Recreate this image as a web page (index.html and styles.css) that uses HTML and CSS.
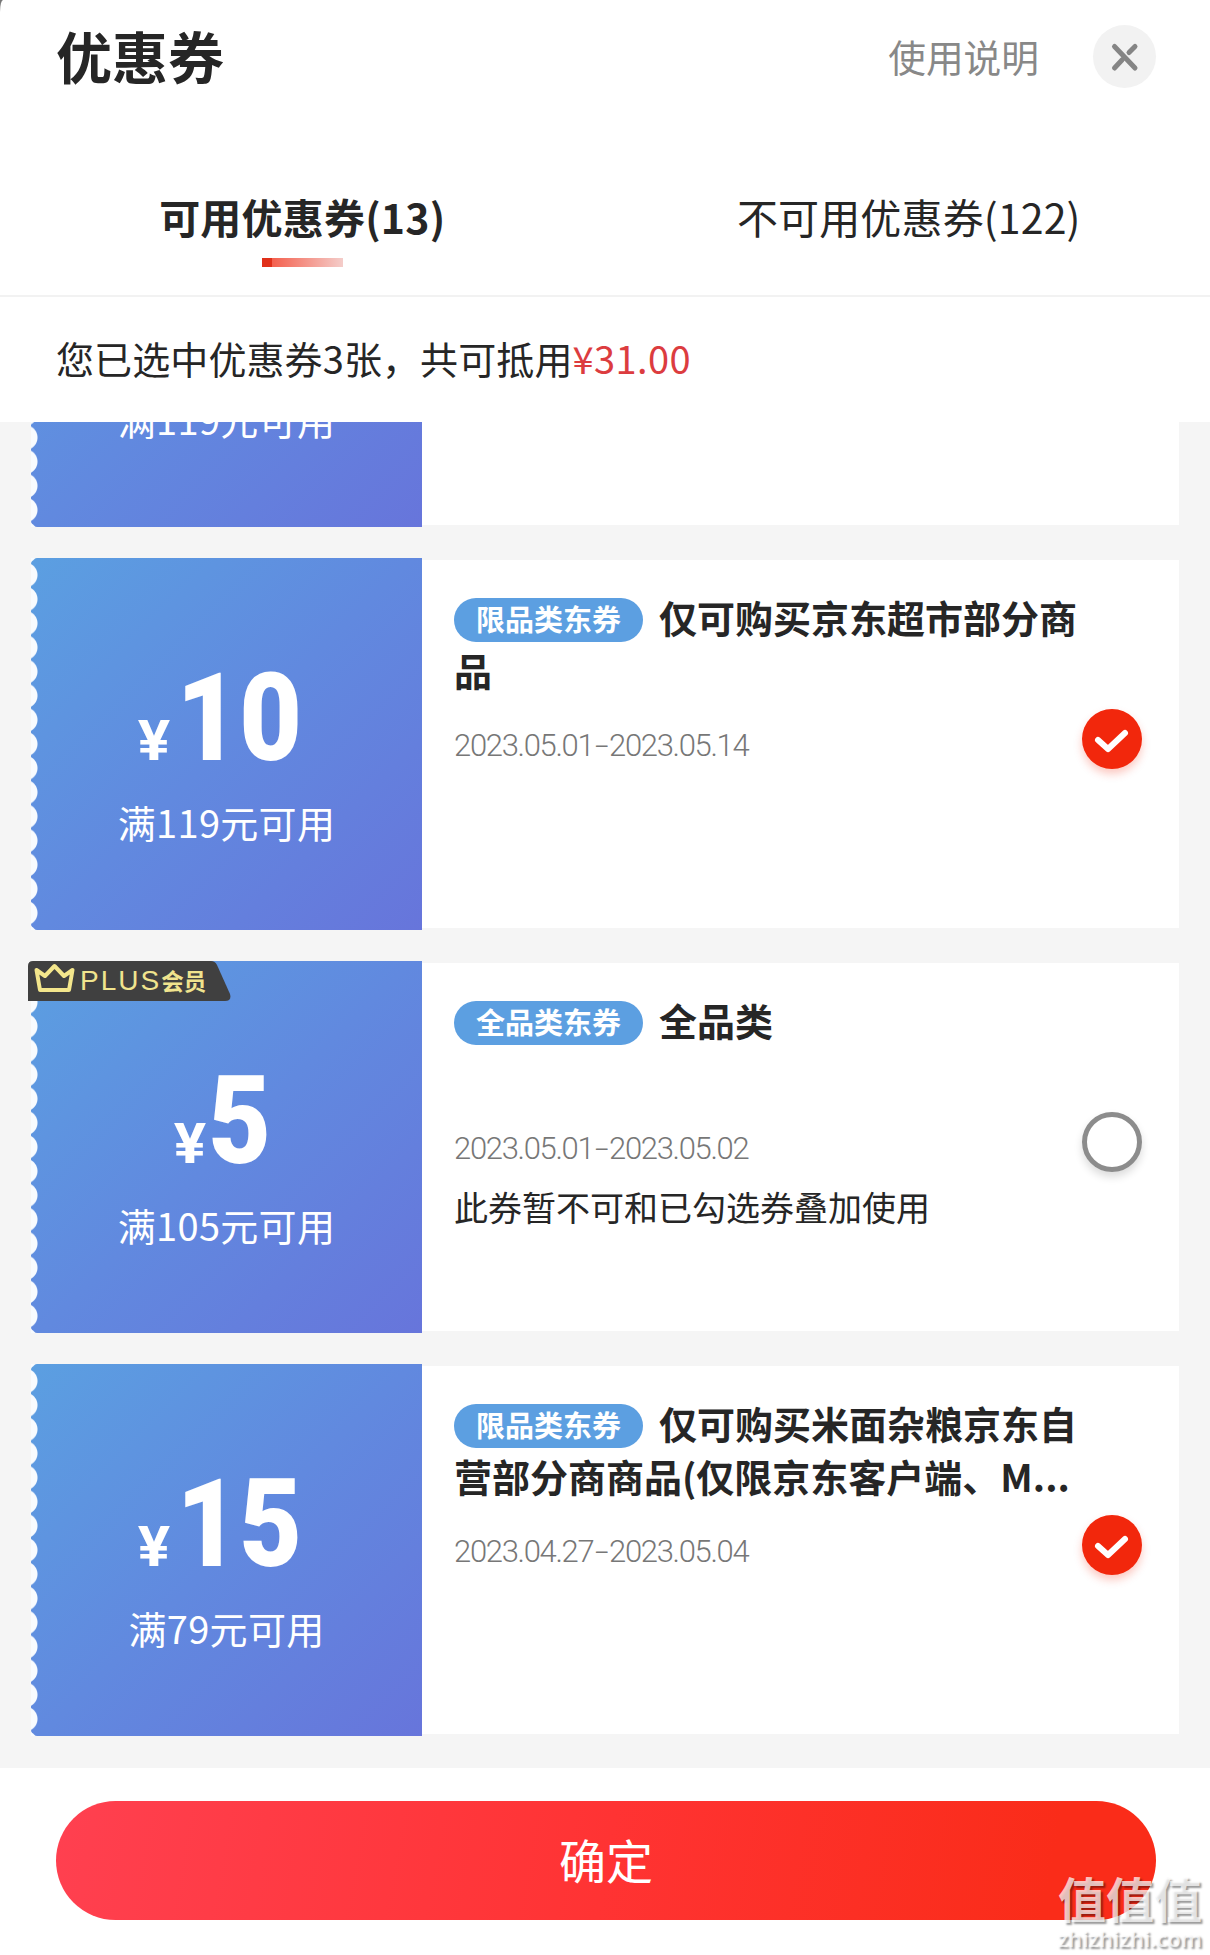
FILE: index.html
```
<!DOCTYPE html>
<html lang="zh-CN">
<head>
  <meta charset="UTF-8">
  <title>优惠券</title>
  <link rel="stylesheet" href="styles.css">
</head>
<body>

  <div class="sheet">
    <div class="header">
      <h2>优惠券</h2>
      <a class="help">使用说明</a>
      <button class="close" type="button">
        <svg width="64" height="64" viewBox="0 0 64 64">
          <path d="M21.500 21.500L42 43M42 21.500L36 27.5M21.500 43L29 35" />
        </svg>
      </button>
    </div>

    <div class="tabs">
      <div class="tab active">可用优惠券(13)</div>
      <div class="tab">不可用优惠券(122)</div>
    </div>

    <div class="summary">您已选中优惠券3张，共可抵用<span>¥31.00</span></div>

    <div class="list">
      <div class="coupon">
        <div class="ticket scrolled">
          <div class="limit">满119元可用</div>
        </div>
        <div class="info"></div>
      </div>

      <div class="coupon">
        <div class="ticket">
          <div class="price"><small>¥</small><span>10</span></div>
          <div class="limit">满119元可用</div>
        </div>
        <div class="info">
          <div class="detail">
            <div class="name"><span class="tag">限品类东券</span>仅可购买京东超市部分商品</div>
            <div class="date">2023.05.01<i>-</i>2023.05.14</div>
          </div>
          <div class="radio checked">
            <svg width="60" height="60" viewBox="0 0 60 60"><path d="M16 31L26 40L43 24" /></svg>
          </div>
        </div>
      </div>

      <div class="coupon">
        <div class="ticket">
          <div class="plus">
            <svg width="203" height="40" viewBox="0 0 203 40">
              <path class="plus-bg" d="M0 5Q0 0 5 0H183Q187 0 189 4L202 33Q204 40 197 40H0Z" />
              <path class="crown" d="M8.500 9L17 15L26.500 5L36 15L44.500 9L41 29H12Z" />
            </svg>
            <span class="plus-text">PLUS<b>会员</b></span>
          </div>
          <div class="price"><small>¥</small><span>5</span></div>
          <div class="limit">满105元可用</div>
        </div>
        <div class="info">
          <div class="detail">
            <div class="name"><span class="tag">全品类东券</span>全品类</div>
            <div class="date">2023.05.01<i>-</i>2023.05.02</div>
            <div class="note">此券暂不可和已勾选券叠加使用</div>
          </div>
          <div class="radio"></div>
        </div>
      </div>

      <div class="coupon">
        <div class="ticket">
          <div class="price"><small>¥</small><span>15</span></div>
          <div class="limit">满79元可用</div>
        </div>
        <div class="info">
          <div class="detail">
            <div class="name"><span class="tag">限品类东券</span>仅可购买米面杂粮京东自营部分商商品(仅限京东客户端、M...</div>
            <div class="date">2023.04.27<i>-</i>2023.05.04</div>
          </div>
          <div class="radio checked">
            <svg width="60" height="60" viewBox="0 0 60 60"><path d="M16 31L26 40L43 24" /></svg>
          </div>
        </div>
      </div>
    </div>

    <div class="footer">
      <button class="confirm" type="button">确定</button>
    </div>

    <div class="watermark">
      <div class="wm-name">值值值</div>
      <div class="wm-site">zhizhizhi.com</div>
    </div>
  </div>

</body>
</html>
```

FILE: styles.css
```
* {
  box-sizing: border-box;
}

body {
  margin: 0;
  background: #777;
  font-family: "Noto Sans CJK SC", sans-serif;
  color: #262626;
}

.sheet {
  position: relative;
  width: 1210px;
  height: 1955px;
  overflow: hidden;
  background: #fff;
  border-radius: 3px 0 0 0 / 12px 0 0 0;
}

button {
  border: none;
  padding: 0;
  font-family: inherit;
}

/* header */
.header {
  display: flex;
  align-items: center;
  height: 113px;
  padding: 0 54px 0 56px;
}

h2 {
  margin: 0 0 3px;
  font-size: 56px;
  line-height: 110px;
}

.help {
  margin: 0 54px 3px auto;
  font-size: 37.7px;
  color: #888;
}

.close {
  width: 63px;
  height: 63px;
  border-radius: 50%;
  background: #f2f2f2;
}

.close svg {
  display: block;
  fill: none;
  stroke: #858585;
  stroke-width: 5;
  stroke-linecap: round;
}

/* tabs */
.tabs {
  display: flex;
  height: 184px;
  padding-top: 62px;
  border-bottom: 2px solid #f2f2f2;
}

.tab {
  flex: 1;
  font-size: 41px;
  line-height: 82px;
  text-align: center;
}

.tab:last-child {
  padding-left: 4px;
  letter-spacing: 0.15px;
}

.tab.active {
  padding-left: 1px;
  font-weight: bold;
  letter-spacing: 0.2px;
}

.tab.active::after {
  content: "";
  display: block;
  width: 81px;
  height: 9px;
  margin: 1px auto 0;
  background: linear-gradient(90deg, #e0301a 0, #e0301a 10px, #f4604e 10px, #f4cdca 100%);
}

.summary {
  height: 125px;
  padding-left: 56px;
  font-size: 38px;
  line-height: 122px;
  letter-spacing: 0.1px;
}

.summary span {
  color: #dc3c3f;
  letter-spacing: 0.4px;
}

/* coupons */
.list {
  display: flex;
  flex-direction: column;
  justify-content: flex-end;
  gap: 31px;
  height: 1346px;
  padding: 0 31px 32px;
  overflow: hidden;
  background: #f5f5f5;
}

.coupon {
  display: flex;
  flex-shrink: 0;
  height: 372px;
}

.ticket {
  position: relative;
  width: 391px;
  padding-top: 98px;
  background: linear-gradient(135deg, #5b9fe1 0%, #6189df 50%, #6775db 100%);
  border-radius: 6px 0 0 6px;
  color: #fff;
  text-align: center;
}

.ticket.scrolled {
  padding-top: 223px;
}

/* torn left edge */
.ticket::before {
  content: "";
  position: absolute;
  left: 0;
  top: 0;
  width: 8px;
  height: 100%;
  background: radial-gradient(circle at -6px 12px, #f8fbfe 12px, transparent 13px) 0 5px / 8px 24.15px;
}

.price {
  height: 125px;
  padding-right: 8px;
  font-family: Roboto, sans-serif;
  font-size: 123px;
  font-weight: 900;
  line-height: 124px;
}

.price small {
  display: inline-block;
  margin-right: 4px;
  font-size: 56px;
  font-weight: bold;
  line-height: 60px;
  transform: scaleX(1.08);
}

.price span {
  display: inline-block;
  margin: 0 -5px;
  transform: scaleX(0.88);
}

.limit {
  margin-top: 13px;
  font-size: 38px;
  line-height: 56px;
  letter-spacing: 0.3px;
}

.plus {
  position: absolute;
  left: -3px;
  top: 0;
  width: 203px;
  height: 40px;
}

.plus svg {
  display: block;
}

.plus-bg {
  fill: #404040;
}

.crown {
  fill: none;
  stroke: #f3e68c;
  stroke-width: 4;
  stroke-linejoin: round;
}

.plus-text {
  position: absolute;
  left: 52px;
  top: 1px;
  font-family: "Liberation Sans", "Noto Sans CJK SC", sans-serif;
  font-size: 28px;
  line-height: 38px;
  letter-spacing: 2px;
  color: #f0e48e;
}

.plus-text b {
  font-size: 22.5px;
  letter-spacing: 0;
}

.info {
  display: flex;
  flex: 1;
  margin: 2px 0;
  padding: 33px 37px 0 32px;
  background: #fff;
}

.detail {
  width: 628px;
}

.name {
  height: 106px;
  margin-top: -3px;
  font-size: 38px;
  font-weight: bold;
  line-height: 53px;
}

.tag {
  display: inline-block;
  width: 189px;
  height: 44px;
  margin: 8px 16px 0 0;
  border-radius: 22px;
  background: #5c9fe1;
  color: #fff;
  font-size: 29px;
  line-height: 41px;
  text-align: center;
  vertical-align: top;
}

.date {
  margin-top: 28px;
  font-family: Roboto, sans-serif;
  font-size: 31px;
  font-weight: 300;
  line-height: 44px;
  letter-spacing: -1.3px;
  color: #777;
}

.date i {
  display: inline-block;
  font-style: normal;
  transform: scaleX(1.6);
  margin: 0 4px;
}

.note {
  margin-top: 11px;
  font-size: 34px;
  line-height: 50px;
}

.radio {
  width: 60px;
  height: 60px;
  margin: 116px 0 0 auto;
  border: 5px solid #8c8c8c;
  border-radius: 50%;
  box-shadow: 0 5px 8px rgba(0, 0, 0, 0.14);
}

.radio.checked {
  border: none;
  background: #f2270c;
  box-shadow: 0 5px 8px rgba(242, 39, 12, 0.25);
}

.radio svg {
  display: block;
  fill: none;
  stroke: #fff;
  stroke-width: 6;
  stroke-linecap: round;
  stroke-linejoin: round;
}

/* footer */
.footer {
  padding: 33px 54px 0 56px;
}

.confirm {
  display: block;
  width: 100%;
  height: 119px;
  padding-bottom: 4px;
  border-radius: 60px;
  background: linear-gradient(100deg, #ff4050 0%, #ff3333 50%, #fa2c19 90%);
  color: #fff;
  font-size: 47px;
}

.watermark {
  position: absolute;
  right: 8px;
  bottom: 4px;
  color: rgba(255, 255, 255, 0.72);
  text-align: right;
  text-shadow: 2px 2px 2px rgba(0, 0, 0, 0.4);
}

.wm-name {
  font-size: 48px;
  font-weight: bold;
  line-height: 58px;
}

.wm-site {
  font-family: "Noto Sans", sans-serif;
  font-size: 22px;
  font-weight: 600;
  line-height: 25px;
}
```
